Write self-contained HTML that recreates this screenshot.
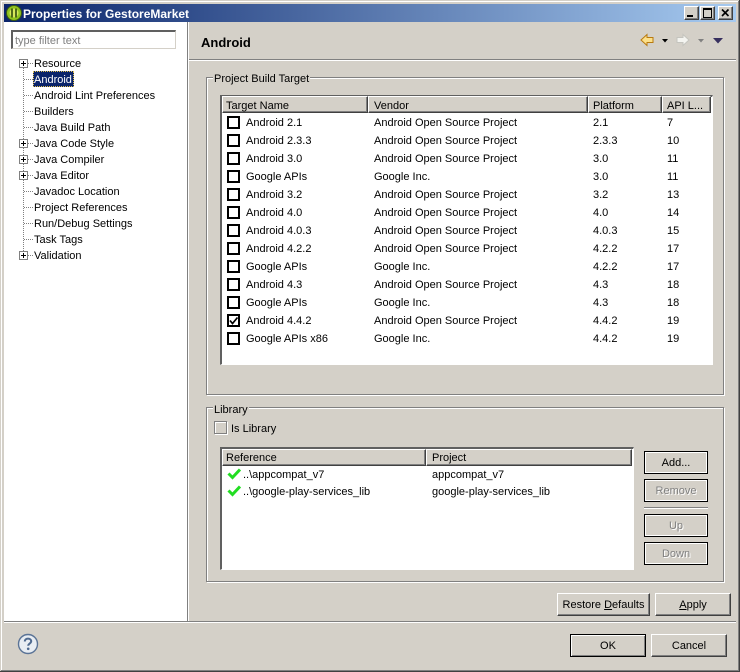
<!DOCTYPE html>
<html><head><meta charset="utf-8"><style>
html,body{margin:0;padding:0;width:740px;height:672px;overflow:hidden;background:#d4d0c8}
body{position:relative;font:11px/14px "Liberation Sans",sans-serif;color:#000;-webkit-font-smoothing:none}
div,svg{position:absolute}
.t{white-space:nowrap;height:14px;margin-top:1px}
.l{background:#808080}.w{background:#fff}
.cb{width:9px;height:9px;border:2px solid #000;background:#fff}
.h{background:#d4d0c8;height:17px;box-sizing:border-box;border-top:1px solid #fff;border-left:1px solid #fff;border-right:1px solid #404040;border-bottom:1px solid #404040;box-shadow:inset -1px -1px 0 #808080}
.b{box-sizing:border-box;background:#d4d0c8;border-top:1px solid #fff;border-left:1px solid #fff;border-right:1px solid #404040;border-bottom:1px solid #404040;box-shadow:inset -1px -1px 0 #808080;text-align:center;line-height:22px;height:23px}
.d{border:1px solid #000;color:#808080;text-shadow:1px 1px 0 #fff;box-shadow:inset 1px 1px 0 #fff,inset -1px -1px 0 #fff;line-height:22px}
.g{box-sizing:border-box;border:1px solid #808080;box-shadow:1px 1px 0 #fff,inset 1px 1px 0 #fff}
.p{width:9px;height:9px;box-sizing:border-box;border:1px solid #808080;background:#fff}
.p:before{content:"";position:absolute;left:1px;top:3px;width:5px;height:1px;background:#000}
.p:after{content:"";position:absolute;left:3px;top:1px;width:1px;height:5px;background:#000}
.v{border-left:1px dotted #808080;width:0}
.o{border-top:1px dotted #808080;height:0}
u{text-decoration:underline}
</style></head><body>
<!-- window frame -->
<div style="left:0;top:0;width:740px;height:1px;background:#d4d0c8"></div>
<div style="left:1px;top:1px;width:738px;height:1px;background:#fff"></div>
<div style="left:1px;top:1px;width:1px;height:670px;background:#fff"></div>
<div style="left:739px;top:0;width:1px;height:672px;background:#404040"></div>
<div style="left:738px;top:1px;width:1px;height:670px;background:#808080"></div>
<div style="left:0;top:671px;width:740px;height:1px;background:#404040"></div>
<div style="left:1px;top:670px;width:738px;height:1px;background:#808080"></div>
<!-- title bar -->
<div style="left:4px;top:4px;width:732px;height:18px;background:linear-gradient(90deg,#0a246a,#a6caf0)"></div>
<svg style="left:5px;top:4px" width="18" height="18" viewBox="0 0 18 18"><circle cx="9" cy="9" r="7.5" fill="#8fc31f" stroke="#3b5a10"/><circle cx="9" cy="9" r="4.5" fill="#d6e85a"/><path d="M7 4.5v9M11 4.5v9" stroke="#2f4a0c" stroke-width="1.6"/></svg>
<div class="t" style="left:23px;top:6px;color:#fff;font-weight:bold;font-size:12px">Properties for GestoreMarket</div>
<div class="b" style="left:684px;top:6px;width:15px;height:14px"></div><div style="left:687px;top:15px;width:6px;height:2px;background:#000"></div>
<div class="b" style="left:700px;top:6px;width:15px;height:14px"></div><div style="left:703px;top:8px;width:7px;height:7px;border:1px solid #000;border-top-width:2px"></div>
<div class="b" style="left:718px;top:6px;width:15px;height:14px"></div>
<svg style="left:718px;top:6px" width="15" height="14"><path d="M4 3.5l6.5 6.5M10.5 3.5l-6.5 6.5" stroke="#000" stroke-width="1.6"/></svg>
<!-- left panel -->
<div class="w" style="left:4px;top:22px;width:183px;height:600px"></div>
<div style="left:187px;top:22px;width:1px;height:600px;background:#808080"></div>
<div style="left:188px;top:22px;width:1px;height:600px;background:#fff"></div>
<div style="left:11px;top:30px;width:165px;height:19px;box-sizing:border-box;border-top:2px solid #606060;border-left:2px solid #606060;border-right:1px solid #d4d0c8;border-bottom:1px solid #d4d0c8;background:#fff"></div>
<div class="t" style="left:15px;top:33px;color:#808080">type filter text</div>
<div class="v" style="left:23px;top:63px;height:192px"></div>
<div class="o" style="left:28px;top:63px;width:5px"></div>
<div class="o" style="left:24px;top:79px;width:9px"></div>
<div class="o" style="left:24px;top:95px;width:9px"></div>
<div class="o" style="left:24px;top:111px;width:9px"></div>
<div class="o" style="left:24px;top:127px;width:9px"></div>
<div class="o" style="left:28px;top:143px;width:5px"></div>
<div class="o" style="left:28px;top:159px;width:5px"></div>
<div class="o" style="left:28px;top:175px;width:5px"></div>
<div class="o" style="left:24px;top:191px;width:9px"></div>
<div class="o" style="left:24px;top:207px;width:9px"></div>
<div class="o" style="left:24px;top:223px;width:9px"></div>
<div class="o" style="left:24px;top:239px;width:9px"></div>
<div class="o" style="left:28px;top:255px;width:5px"></div>
<div class="p" style="left:19px;top:59px"></div>
<div class="p" style="left:19px;top:139px"></div>
<div class="p" style="left:19px;top:155px"></div>
<div class="p" style="left:19px;top:171px"></div>
<div class="p" style="left:19px;top:251px"></div>
<div style="left:33px;top:71px;width:41px;height:16px;box-sizing:border-box;background:#0a246a;outline:1px dotted #e0c050;outline-offset:-1px"></div>
<div class="t" style="left:34px;top:56px">Resource</div>
<div class="t" style="left:34px;top:72px;color:#fff">Android</div>
<div class="t" style="left:34px;top:88px">Android Lint Preferences</div>
<div class="t" style="left:34px;top:104px">Builders</div>
<div class="t" style="left:34px;top:120px">Java Build Path</div>
<div class="t" style="left:34px;top:136px">Java Code Style</div>
<div class="t" style="left:34px;top:152px">Java Compiler</div>
<div class="t" style="left:34px;top:168px">Java Editor</div>
<div class="t" style="left:34px;top:184px">Javadoc Location</div>
<div class="t" style="left:34px;top:200px">Project References</div>
<div class="t" style="left:34px;top:216px">Run/Debug Settings</div>
<div class="t" style="left:34px;top:232px">Task Tags</div>
<div class="t" style="left:34px;top:248px">Validation</div>
<!-- header -->
<div class="t" style="left:201px;top:35px;font-weight:bold;font-size:13px">Android</div>
<div style="left:189px;top:59px;width:547px;height:1px;background:#808080"></div>
<div style="left:189px;top:60px;width:547px;height:1px;background:#fff"></div>
<svg style="left:640px;top:33px" width="14" height="14"><path d="M1 7L7 1.5V4.5H13V9.5H7V12.5Z" fill="#fce08a" stroke="#b87a10"/></svg>
<svg style="left:662px;top:39px" width="7" height="5"><path d="M0 0H6L3 3.5Z" fill="#000"/></svg>
<svg style="left:676px;top:33px" width="14" height="14"><path d="M13 7L7 1.5V4.5H1V9.5H7V12.5Z" fill="#f4f4f0" stroke="#c4c4be"/></svg>
<svg style="left:698px;top:39px" width="7" height="5"><path d="M0 0H6L3 3.5Z" fill="#808080"/></svg>
<svg style="left:713px;top:38px" width="11" height="6"><path d="M0 0H10L5 5.5Z" fill="#37305f"/></svg>
<!-- group 1 -->
<div class="g" style="left:206px;top:77px;width:518px;height:318px"></div>
<div style="left:213px;top:71px;width:97px;height:14px;background:#d4d0c8"></div>
<div class="t" style="left:214px;top:71px">Project Build Target</div>
<div class="w" style="left:220px;top:95px;width:493px;height:270px;box-sizing:border-box;border-top:2px solid #606060;border-left:2px solid #606060;border-right:1px solid #fff;border-bottom:1px solid #fff"></div>
<div class="h" style="left:222px;top:96px;width:146px"></div>
<div class="h" style="left:368px;top:96px;width:220px"></div>
<div class="h" style="left:588px;top:96px;width:74px"></div>
<div class="h" style="left:662px;top:96px;width:49px"></div>
<div class="t" style="left:226px;top:98px">Target Name</div>
<div class="t" style="left:374px;top:98px">Vendor</div>
<div class="t" style="left:593px;top:98px">Platform</div>
<div class="t" style="left:667px;top:98px">API L...</div>
<!-- rows -->
<div class="cb" style="left:227px;top:116px"></div><div class="t" style="left:246px;top:115px">Android 2.1</div><div class="t" style="left:374px;top:115px">Android Open Source Project</div><div class="t" style="left:593px;top:115px">2.1</div><div class="t" style="left:667px;top:115px">7</div>
<div class="cb" style="left:227px;top:134px"></div><div class="t" style="left:246px;top:133px">Android 2.3.3</div><div class="t" style="left:374px;top:133px">Android Open Source Project</div><div class="t" style="left:593px;top:133px">2.3.3</div><div class="t" style="left:667px;top:133px">10</div>
<div class="cb" style="left:227px;top:152px"></div><div class="t" style="left:246px;top:151px">Android 3.0</div><div class="t" style="left:374px;top:151px">Android Open Source Project</div><div class="t" style="left:593px;top:151px">3.0</div><div class="t" style="left:667px;top:151px">11</div>
<div class="cb" style="left:227px;top:170px"></div><div class="t" style="left:246px;top:169px">Google APIs</div><div class="t" style="left:374px;top:169px">Google Inc.</div><div class="t" style="left:593px;top:169px">3.0</div><div class="t" style="left:667px;top:169px">11</div>
<div class="cb" style="left:227px;top:188px"></div><div class="t" style="left:246px;top:187px">Android 3.2</div><div class="t" style="left:374px;top:187px">Android Open Source Project</div><div class="t" style="left:593px;top:187px">3.2</div><div class="t" style="left:667px;top:187px">13</div>
<div class="cb" style="left:227px;top:206px"></div><div class="t" style="left:246px;top:205px">Android 4.0</div><div class="t" style="left:374px;top:205px">Android Open Source Project</div><div class="t" style="left:593px;top:205px">4.0</div><div class="t" style="left:667px;top:205px">14</div>
<div class="cb" style="left:227px;top:224px"></div><div class="t" style="left:246px;top:223px">Android 4.0.3</div><div class="t" style="left:374px;top:223px">Android Open Source Project</div><div class="t" style="left:593px;top:223px">4.0.3</div><div class="t" style="left:667px;top:223px">15</div>
<div class="cb" style="left:227px;top:242px"></div><div class="t" style="left:246px;top:241px">Android 4.2.2</div><div class="t" style="left:374px;top:241px">Android Open Source Project</div><div class="t" style="left:593px;top:241px">4.2.2</div><div class="t" style="left:667px;top:241px">17</div>
<div class="cb" style="left:227px;top:260px"></div><div class="t" style="left:246px;top:259px">Google APIs</div><div class="t" style="left:374px;top:259px">Google Inc.</div><div class="t" style="left:593px;top:259px">4.2.2</div><div class="t" style="left:667px;top:259px">17</div>
<div class="cb" style="left:227px;top:278px"></div><div class="t" style="left:246px;top:277px">Android 4.3</div><div class="t" style="left:374px;top:277px">Android Open Source Project</div><div class="t" style="left:593px;top:277px">4.3</div><div class="t" style="left:667px;top:277px">18</div>
<div class="cb" style="left:227px;top:296px"></div><div class="t" style="left:246px;top:295px">Google APIs</div><div class="t" style="left:374px;top:295px">Google Inc.</div><div class="t" style="left:593px;top:295px">4.3</div><div class="t" style="left:667px;top:295px">18</div>
<div class="cb" style="left:227px;top:314px"></div><svg style="left:229px;top:316px" width="10" height="10"><path d="M1 4.5L3.5 7.5L8.5 1.5" fill="none" stroke="#000" stroke-width="1.7"/></svg><div class="t" style="left:246px;top:313px">Android 4.4.2</div><div class="t" style="left:374px;top:313px">Android Open Source Project</div><div class="t" style="left:593px;top:313px">4.4.2</div><div class="t" style="left:667px;top:313px">19</div>
<div class="cb" style="left:227px;top:332px"></div><div class="t" style="left:246px;top:331px">Google APIs x86</div><div class="t" style="left:374px;top:331px">Google Inc.</div><div class="t" style="left:593px;top:331px">4.4.2</div><div class="t" style="left:667px;top:331px">19</div>
<!-- group 2 -->
<div class="g" style="left:206px;top:407px;width:518px;height:175px"></div>
<div style="left:213px;top:403px;width:36px;height:14px;background:#d4d0c8"></div>
<div class="t" style="left:214px;top:402px">Library</div>
<div style="left:214px;top:421px;width:13px;height:13px;box-sizing:border-box;background:#d4d0c8;border:1px solid #808080;box-shadow:1px 1px 0 #fff,inset 1px 1px 0 #fff"></div>
<div class="t" style="left:231px;top:421px">Is Library</div>
<div class="w" style="left:220px;top:447px;width:414px;height:123px;box-sizing:border-box;border-top:2px solid #606060;border-left:2px solid #606060;border-right:1px solid #fff;border-bottom:1px solid #fff"></div>
<div class="h" style="left:222px;top:449px;width:204px"></div>
<div class="h" style="left:426px;top:449px;width:206px"></div>
<div class="t" style="left:226px;top:450px">Reference</div>
<div class="t" style="left:432px;top:450px">Project</div>
<svg style="left:227px;top:467px" width="15" height="13"><path d="M1.5 6.5L5.5 10.5L13 2.5" fill="none" stroke="#22dd22" stroke-width="3"/></svg>
<div class="t" style="left:243px;top:467px">..\appcompat_v7</div><div class="t" style="left:432px;top:467px">appcompat_v7</div>
<svg style="left:227px;top:484px" width="15" height="13"><path d="M1.5 6.5L5.5 10.5L13 2.5" fill="none" stroke="#22dd22" stroke-width="3"/></svg>
<div class="t" style="left:243px;top:484px">..\google-play-services_lib</div><div class="t" style="left:432px;top:484px">google-play-services_lib</div>
<!-- side buttons -->
<div class="b" style="left:644px;top:451px;width:64px;border:1px solid #000;box-shadow:inset 1px 1px 0 #fff,inset -1px -1px 0 #fff">Add...</div>
<div class="b d" style="left:644px;top:479px;width:64px">Remove</div>
<div style="left:644px;top:507px;width:64px;height:1px;background:#808080"></div>
<div style="left:644px;top:508px;width:64px;height:1px;background:#fff"></div>
<div class="b d" style="left:644px;top:514px;width:64px">Up</div>
<div class="b d" style="left:644px;top:542px;width:64px">Down</div>
<div class="b" style="left:557px;top:593px;width:93px">Restore <u>D</u>efaults</div>
<div class="b" style="left:655px;top:593px;width:76px"><u>A</u>pply</div>
<!-- footer -->
<div style="left:4px;top:621px;width:732px;height:1px;background:#808080"></div>
<div style="left:4px;top:622px;width:732px;height:1px;background:#fff"></div>
<svg style="left:17px;top:633px" width="22" height="22" viewBox="0 0 22 22"><circle cx="11" cy="11" r="9.5" fill="#e8edf3" stroke="#5a7396" stroke-width="1.4"/><path d="M7.8 8.5C7.8 6.7 9.2 5.6 11 5.6C12.9 5.6 14.2 6.7 14.2 8.3C14.2 10.4 11.2 10.6 11.2 12.8" fill="none" stroke="#4f6a90" stroke-width="2"/><circle cx="11.2" cy="15.8" r="1.3" fill="#4f6a90"/></svg>
<div class="b" style="left:570px;top:634px;width:76px;border:1px solid #000;box-shadow:inset 1px 1px 0 #fff,inset -1px -1px 0 #808080">OK</div>
<div class="b" style="left:651px;top:634px;width:76px">Cancel</div>
</body></html>
